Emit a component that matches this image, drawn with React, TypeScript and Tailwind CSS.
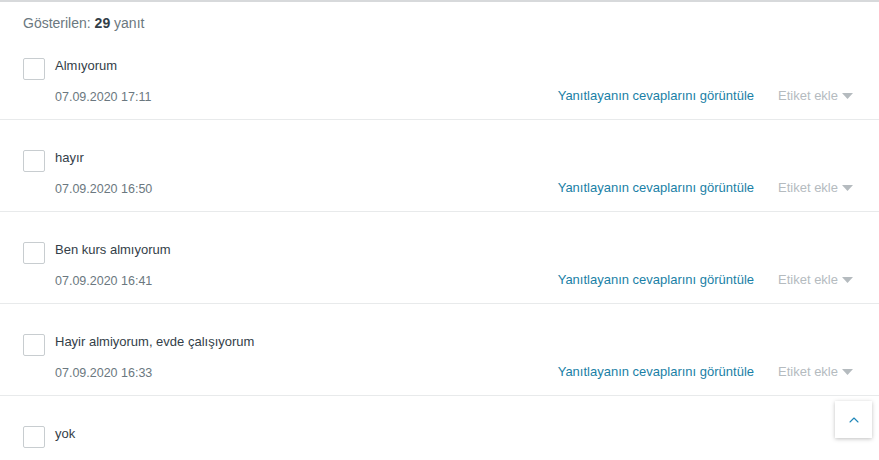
import { ChevronUp } from "lucide-react";

const rows = [
  { text: "Almıyorum", date: "07.09.2020 17:11" },
  { text: "hayır", date: "07.09.2020 16:50" },
  { text: "Ben kurs almıyorum", date: "07.09.2020 16:41" },
  { text: "Hayir almiyorum, evde çalışıyorum", date: "07.09.2020 16:33" },
  { text: "yok", date: "" },
];

export default function App() {
  return (
    <div className="relative h-[460px] w-[879px] overflow-hidden border-t-2 border-[#d7d9db] bg-white font-['Liberation_Sans',Arial,sans-serif]">
      <div className="pl-[23px] pt-[12px] text-[14px] leading-[18px] text-[#6b7880]">
        Gösterilen: <span className="font-bold text-[#333e48]">29</span> yanıt
      </div>

      {rows.map((r, i) => (
        <div
          key={i}
          className={`border-b border-[#e8eaeb] pb-[14px] ${i === 0 ? "pt-[26px]" : "pt-[30px]"}`}
        >
          <div className="flex items-start pl-[23px]">
            <div className="h-[22px] w-[22px] shrink-0 rounded-[2px] border border-[#c8cdd0] bg-white" />
            <div className="ml-[10px] text-[13px] leading-[16px] text-[#333e48]">{r.text}</div>
          </div>
          {r.date && (
            <div className="mt-[9px] flex items-center pr-[26px]">
              <div className="pl-[55px] text-[12.5px] leading-[16px] text-[#6b7880]">{r.date}</div>
              <div className="ml-auto -mt-[3px] flex items-center text-[13px] leading-[16px]">
                <span className="text-[#1a7fa6]">Yanıtlayanın cevaplarını görüntüle</span>
                <span className="ml-[24px] text-[#b5bbbf]">Etiket ekle</span>
                <svg width="11" height="6" viewBox="0 0 11 6" className="ml-[4px]">
                  <path d="M0 0 L11 0 L5.5 6 Z" fill="#b5bbbf" />
                </svg>
              </div>
            </div>
          )}
        </div>
      ))}

      <button className="absolute left-[835px] top-[399px] flex h-[37px] w-[37px] items-center justify-center bg-white shadow-[0_1px_4px_rgba(0,0,0,0.25)]">
        <ChevronUp size={16} strokeWidth={1.6} className="text-[#1d86b8]" />
      </button>
    </div>
  );
}
